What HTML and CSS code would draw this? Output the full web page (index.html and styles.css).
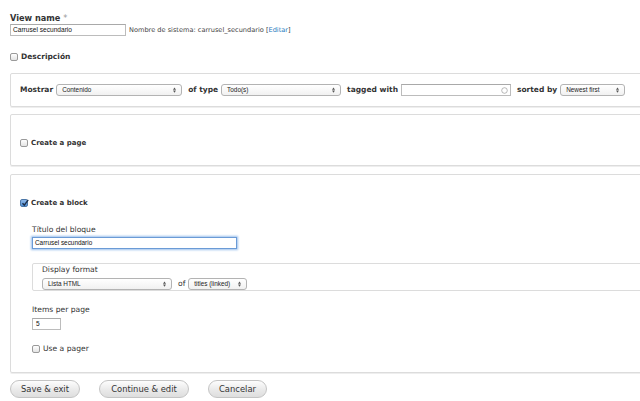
FILE: index.html
```html
<!DOCTYPE html>
<html>
<head>
<meta charset="utf-8">
<link rel="stylesheet" href="styles.css">
</head>
<body>
<div class="page">
  <div class="label lbl-name">View name <span class="req">*</span></div>
  <div class="name-row">
    <div class="tinput name-input">Carrusel secundario</div>
    <span class="machine">Nombre de sistema: carrusel_secundario [<a class="link">Editar</a>]</span>
  </div>
  <div class="check-row desc"><span class="cb"></span><span class="label">Descripción</span></div>

  <div class="fs fs-show">
    <span class="label">Mostrar</span>
    <div class="sel w126">Contenido<svg class="arr" viewBox="0 0 4 7"><path d="M0 3 L2 0 L4 3 Z M0 4 L2 7 L4 4 Z" fill="#555"/></svg></div>
    <span class="label">of type</span>
    <div class="sel w120">Todo(s)<svg class="arr" viewBox="0 0 4 7"><path d="M0 3 L2 0 L4 3 Z M0 4 L2 7 L4 4 Z" fill="#555"/></svg></div>
    <span class="label">tagged with</span>
    <div class="tinput tag-input"><svg class="throbber" viewBox="0 0 8 8"><circle cx="4" cy="4" r="3.2" fill="none" stroke="#999" stroke-width="0.8"/></svg></div>
    <span class="label">sorted by</span>
    <div class="sel w65">Newest first<svg class="arr" viewBox="0 0 4 7"><path d="M0 3 L2 0 L4 3 Z M0 4 L2 7 L4 4 Z" fill="#555"/></svg></div>
  </div>

  <div class="fs fs-page">
    <div class="check-row"><span class="cb"></span><span class="label create">Create a page</span></div>
  </div>

  <div class="fs fs-block">
    <div class="check-row"><span class="cb checked"><svg viewBox="0 0 8 8"><path d="M1.5 4.2 L3.3 6.2 L7.2 0.8" fill="none" stroke="#1d2e4a" stroke-width="1.4"/></svg></span><span class="label create">Create a block</span></div>
    <div class="sub">
      <div class="plain title-lbl">Título del bloque</div>
      <div class="tinput focus">Carrusel secundario</div>
      <div class="fs-inner">
        <div class="plain">Display format</div>
        <div class="df-row">
          <div class="sel w130">Lista HTML<svg class="arr" viewBox="0 0 4 7"><path d="M0 3 L2 0 L4 3 Z M0 4 L2 7 L4 4 Z" fill="#555"/></svg></div>
          <span class="plain of">of</span>
          <div class="sel w59">titles (linked)<svg class="arr" viewBox="0 0 4 7"><path d="M0 3 L2 0 L4 3 Z M0 4 L2 7 L4 4 Z" fill="#555"/></svg></div>
        </div>
      </div>
      <div class="plain items-lbl">Items per page</div>
      <div class="tinput items-input">5</div>
      <div class="check-row pager"><span class="cb"></span><span class="plain">Use a pager</span></div>
    </div>
  </div>

  <div class="buttons">
    <div class="btn b-save">Save &amp; exit</div>
    <div class="btn b-cont">Continue &amp; edit</div>
    <div class="btn b-cancel">Cancelar</div>
  </div>
</div>
</body>
</html>
```

FILE: styles.css
```css
html, body {
  margin: 0;
  padding: 0;
  background: #fff;
  overflow: hidden;
}
body {
  width: 640px;
  height: 401px;
  font-family: "DejaVu Sans", Verdana, sans-serif;
  color: #333;
}
.page {
  padding: 13px 0 0 10px;
  display: flex;
  flex-direction: column;
  align-items: flex-start;
}
.label {
  font-weight: bold;
  font-size: 7.5px;
  line-height: 10px;
  color: #333;
  white-space: nowrap;
}
.lbl-name {
  font-size: 8.2px;
}
.req {
  color: #999;
  font-weight: normal;
}
.plain {
  font-size: 7.6px;
  line-height: 10px;
  color: #333;
  white-space: nowrap;
}
.name-row {
  margin-top: 1px;
  display: flex;
  align-items: center;
}
.tinput {
  box-sizing: border-box;
  height: 12px;
  border: 1px solid #bcbcbc;
  border-top-color: #a9a9a9;
  background: #fff;
  font-family: "Liberation Sans", Arial, sans-serif;
  font-size: 6.6px;
  line-height: 10px;
  padding-left: 2px;
  color: #111;
  white-space: nowrap;
}
.name-input {
  width: 116px;
}
.machine {
  margin-left: 3px;
  font-size: 6.6px;
  color: #444;
  white-space: nowrap;
}
.link {
  color: #2a7bc0;
}
.check-row {
  display: flex;
  align-items: center;
  height: 10px;
}
.desc {
  margin-top: 16px;
}
.cb {
  box-sizing: border-box;
  width: 8px;
  height: 8px;
  border: 1px solid #9a9a9a;
  border-radius: 2px;
  background: linear-gradient(#fff, #e4e4e4);
  margin-right: 3px;
  flex: none;
  position: relative;
}
.cb.checked {
  background: linear-gradient(#8fb8e8, #4f8fd6);
  border-color: #4b77a8;
}
.cb.checked svg {
  position: absolute;
  left: 0;
  top: -1px;
  width: 8px;
  height: 8px;
}
.fs {
  box-sizing: border-box;
  width: 700px;
  border: 1px solid #dcdcdc;
  border-radius: 2px;
  box-shadow: 0 1px 0 #eee;
}
.fs-show {
  margin-top: 11px;
  height: 34px;
  display: flex;
  align-items: center;
  padding-left: 9px;
}
.fs-show .label + .sel,
.fs-show .label + .tinput {
  margin-left: 3px;
}
.fs-show .sel + .label,
.fs-show .tinput + .label {
  margin-left: 6px;
}
.sel {
  box-sizing: border-box;
  height: 12px;
  border: 1px solid #b3b3b3;
  border-radius: 3px;
  background: linear-gradient(#fff, #f1f1f1);
  font-family: "Liberation Sans", Arial, sans-serif;
  font-size: 6.4px;
  line-height: 10px;
  padding-left: 5px;
  color: #222;
  position: relative;
  white-space: nowrap;
  overflow: hidden;
}
.arr {
  position: absolute;
  right: 5px;
  top: 2px;
  width: 3px;
  height: 6px;
}
.w126 { width: 126px; }
.w120 { width: 120px; }
.w65 { width: 65px; }
.w130 { width: 130px; }
.w59 { width: 59px; }
.tag-input {
  width: 110px;
  position: relative;
}
.throbber {
  position: absolute;
  right: 2px;
  top: 2px;
  width: 7px;
  height: 7px;
}
.fs-page {
  margin-top: 7px;
  height: 52px;
  display: flex;
  align-items: center;
  padding-left: 9px;
  padding-top: 5px;
}
.create {
  font-size: 7px;
}
.fs-block {
  margin-top: 8px;
  height: 199px;
  padding: 23px 0 0 9px;
}
.sub {
  padding-left: 12px;
  display: flex;
  flex-direction: column;
  align-items: flex-start;
}
.title-lbl {
  margin-top: 17px;
}
.focus {
  margin-top: 2px;
  width: 205px;
  border: 1px solid #6b9bd6;
  box-shadow: 0 0 2px 1px #9cc0ec;
  font-size: 6.4px;
}
.fs-inner {
  box-sizing: border-box;
  margin-top: 14px;
  width: 680px;
  height: 28px;
  border: 1px solid #dcdcdc;
  border-radius: 2px;
  padding: 1px 0 0 9px;
}
.df-row {
  margin-top: 3px;
  display: flex;
  align-items: center;
}
.of {
  margin: 0 3px 0 6px;
}
.items-lbl {
  margin-top: 14px;
}
.items-input {
  margin-top: 3px;
  width: 29px;
  padding-left: 3px;
}
.pager {
  margin-top: 14px;
}
.buttons {
  margin-top: 7px;
  display: flex;
  gap: 19px;
}
.btn {
  box-sizing: border-box;
  height: 18px;
  border: 1px solid #c4c4c4;
  border-radius: 9px;
  background: linear-gradient(#fdfdfd, #e8e8e8 60%, #dedede);
  font-size: 8.4px;
  line-height: 16px;
  text-align: center;
  color: #333;
  white-space: nowrap;
}
.b-save { width: 70px; }
.b-cont { width: 90px; }
.b-cancel { width: 59px; }
```
